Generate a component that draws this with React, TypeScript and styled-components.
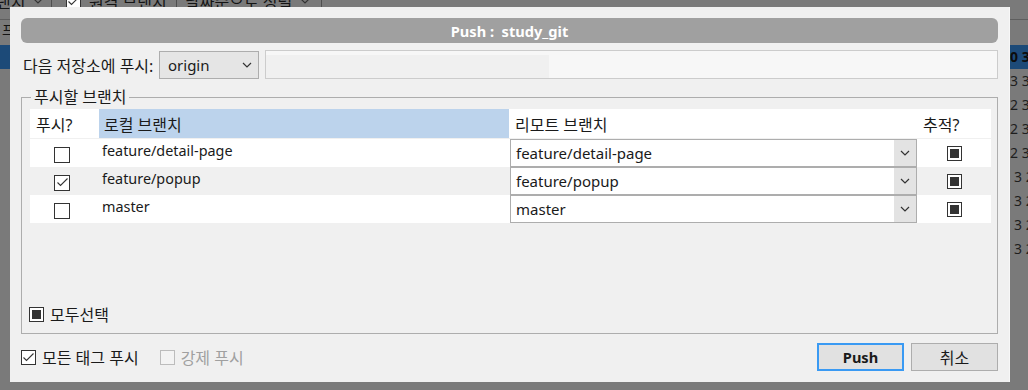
import React from "react";
import styled, { createGlobalStyle, css } from "styled-components";

const GlobalStyle = createGlobalStyle`
    html, body {
        margin: 0;
        padding: 0;
    }
    body {
        width: 1028px;
        height: 390px;
        overflow: hidden;
        background: #7a7a7a;
        font-family: "Noto Sans", "Noto Sans CJK KR", sans-serif;
        font-size: 14.4px;
        color: #1a1a1a;
    }
`;

const FONT = `"Noto Sans", "Noto Sans CJK KR", sans-serif`;
// 한글 라벨은 Latin 보다 살짝 크게 (맑은 고딕 폭 맞춤)
const KO_SIZE = "16px";

// 뒤에 깔린 메인 화면 (어둡게)
const Screen = styled.div`
    position: relative;
    width: 1028px;
    height: 390px;
    overflow: hidden;
    background: #7a7a7a;
`;

const Toolbar = styled.div`
    height: 19px;
    border-bottom: 1px solid #5e5e5e;
    display: flex;
    align-items: flex-start;
    overflow: hidden;
`;

const ToolItem = styled.div<{ w: number; pl?: number }>`
    width: ${p => p.w}px;
    margin-top: -10px;
    height: 22px;
    display: flex;
    align-items: center;
    gap: 8px;
    padding-left: ${p => p.pl || 8}px;
    box-sizing: border-box;
    border-right: 1px solid #4e4e4e;
    color: #141414;
    font-size: ${KO_SIZE};
    white-space: nowrap;
    &:first-child {
        margin-left: -12px;
    }
`;

const Behind = styled.div`
    display: flex;
    justify-content: space-between;
`;

const BehindCol = styled.div<{ w: number }>`
    width: ${p => p.w}px;
    overflow: hidden;
    display: flex;
    flex-direction: column;
`;

const BehindHead = styled.div`
    height: 25px;
    color: #141414;
    font-size: 14px;
    line-height: 20px;
    padding-left: 2px;
    white-space: nowrap;
`;

const BehindRow = styled.div<{ selected?: boolean; indent?: number }>`
    height: 24px;
    line-height: 24px;
    font-size: 14px;
    white-space: nowrap;
    padding-left: ${p => p.indent || 1}px;
    color: #1e1e1e;
    ${p =>
        p.selected &&
        css`
            background: #1c4a78;
            color: #0c0c0c;
            font-weight: 700;
        `}
`;

// 다이얼로그
const Dialog = styled.div`
    position: absolute;
    left: 10px;
    top: 7px;
    width: 1000px;
    height: 375px;
    box-sizing: border-box;
    padding: 11px;
    background: #f0f0f0;
    border-right: 1px solid #f7f7f7;
    display: flex;
    flex-direction: column;
`;

const TitleBar = styled.div`
    height: 25px;
    border-radius: 6px;
    background: #a0a0a0;
    color: #ffffff;
    font-weight: 700;
    font-size: 14.6px;
    display: flex;
    align-items: center;
    justify-content: center;
    white-space: pre;
`;

const RepoRow = styled.div`
    margin-top: 7px;
    height: 29px;
    display: flex;
    align-items: center;
`;

const Label = styled.span<{ disabled?: boolean }>`
    color: ${p => (p.disabled ? "#a0a0a0" : "#1a1a1a")};
    font-size: ${KO_SIZE};
    white-space: nowrap;
`;

const RepoLabel = styled(Label)`
    width: 138px;
    padding-left: 2px;
    box-sizing: border-box;
`;

const Combo = styled.div<{ w?: number; bg?: string }>`
    ${p => (p.w ? `width: ${p.w}px;` : "flex: 1;")}
    height: 28px;
    box-sizing: border-box;
    border: 1px solid #adadad;
    background: ${p => p.bg || "#ffffff"};
    display: flex;
    align-items: center;
    justify-content: space-between;
`;

const ComboText = styled.span<{ pl?: number }>`
    padding-left: ${p => p.pl || 5}px;
    font-size: 15px;
    white-space: nowrap;
    color: #1a1a1a;
`;

const ComboButton = styled.div<{ filled?: boolean }>`
    width: 22px;
    align-self: stretch;
    display: flex;
    align-items: center;
    justify-content: center;
    background: ${p => (p.filled ? "#e3e3e3" : "transparent")};
`;

const UrlBox = styled.div`
    flex: 1;
    margin-left: 6px;
    height: 29px;
    box-sizing: border-box;
    border: 1px solid #cccccc;
    background: #f7f7f7;
    display: flex;
    align-items: flex-end;
`;

const UrlInner = styled.div`
    width: 283px;
    height: 23px;
    background: #f0f0f0;
`;

const Group = styled.div`
    position: relative;
    margin-top: 18px;
    height: 237px;
    box-sizing: border-box;
    border: 1px solid #adadad;
    padding: 11px 6px 0 8px;
    display: flex;
    flex-direction: column;
`;

const Legend = styled.span`
    position: absolute;
    left: 9px;
    top: -12px;
    padding: 0 3px;
    background: #f0f0f0;
    line-height: 22px;
    font-size: ${KO_SIZE};
    color: #1a1a1a;
`;

const Table = styled.div`
    display: grid;
    grid-template-columns: 69px 410px 408px 74px;
    grid-template-rows: 30px 28px 28px 28px;
    flex: 1;
    align-content: start;
`;

const HeadCell = styled.div<{ active?: boolean }>`
    background: ${p => (p.active ? "#bcd3ec" : "#ffffff")};
    border-bottom: 1px solid #f0f0f0;
    display: flex;
    align-items: center;
    padding-left: ${p => (p.active ? 5 : 6)}px;
    color: #1a1a1a;
    font-size: ${KO_SIZE};
    white-space: nowrap;
`;

const Cell = styled.div<{ alt?: boolean; center?: boolean }>`
    background: ${p => (p.alt ? "#f0f0f0" : "#ffffff")};
    display: flex;
    align-items: ${p => (p.center ? "center" : "flex-start")};
    justify-content: ${p => (p.center ? "center" : "flex-start")};
    padding-left: ${p => (p.center ? 0 : 3)}px;
    line-height: 23px;
    white-space: nowrap;
    color: #1a1a1a;
`;

const RemoteCell = styled(Cell)`
    padding-left: 1px;
    align-items: stretch;
`;

const SelectAll = styled.div`
    display: flex;
    align-items: center;
    gap: 6px;
    margin-left: -1px;
    margin-bottom: 7px;
`;

const BottomRow = styled.div`
    margin-top: 9px;
    height: 28px;
    display: flex;
    align-items: center;
`;

const CheckLine = styled.label<{ ml?: number }>`
    display: flex;
    align-items: center;
    gap: 6px;
    margin-left: ${p => p.ml || 0}px;
`;

const Buttons = styled.div`
    margin-left: auto;
    display: flex;
    gap: 7px;
`;

const Button = styled.button<{ primary?: boolean }>`
    width: 87px;
    height: 28px;
    box-sizing: border-box;
    background: #e1e1e1;
    border: ${p => (p.primary ? "2px solid #3a9af3" : "1px solid #adadad")};
    font-family: ${FONT};
    font-size: ${p => (p.primary ? "14.6px" : KO_SIZE)};
    font-weight: ${p => (p.primary ? 700 : 400)};
    color: #1a1a1a;
    padding: 0;
`;

const Box = styled.span<{ disabled?: boolean; size: number }>`
    width: ${p => p.size}px;
    height: ${p => p.size}px;
    box-sizing: border-box;
    border: 1px solid ${p => (p.disabled ? "#bcbcbc" : "#333333")};
    background: ${p => (p.disabled ? "#f3f3f3" : "#ffffff")};
    display: flex;
    align-items: center;
    justify-content: center;
    flex: none;
`;

const Fill = styled.span`
    width: 9px;
    height: 9px;
    background: #333333;
`;

type CheckState = "off" | "on" | "mixed";

const Check: React.FC<{ state: CheckState; disabled?: boolean; size?: number; mt?: number; ml?: number }> = ({
    state,
    disabled,
    size = 15,
    mt,
    ml
}) => (
    <Box disabled={disabled} size={size} style={mt || ml ? { marginTop: mt, marginLeft: ml } : undefined}>
        {state === "on" && (
            <svg width="13" height="13" viewBox="0 0 13 13">
                <polyline points="1.5,6.5 4.5,9.5 11.5,2.5" fill="none" stroke="#333" strokeWidth="1.1" />
            </svg>
        )}
        {state === "mixed" && <Fill />}
    </Box>
);

const Chevron = () => (
    <svg width="10" height="6" viewBox="0 0 10 6">
        <polyline points="1,1 5,5 9,1" fill="none" stroke="#333" strokeWidth="1.2" />
    </svg>
);

const branches = [
    { local: "feature/detail-page", remote: "feature/detail-page", push: false },
    { local: "feature/popup", remote: "feature/popup", push: true },
    { local: "master", remote: "master", push: false }
];

const rightNums = [
    { t: "0 3", sel: true, i: 1 },
    { t: "3 3", i: 1 },
    { t: "2 3", i: 1 },
    { t: "2 3", i: 1 },
    { t: "2 3", i: 1 },
    { t: "3 2", i: 5 },
    { t: "3 2", i: 5 },
    { t: "3 2", i: 5 },
    { t: "3 2", i: 5 }
];

const App: React.FC = () => {
    return (
        <Screen>
            <GlobalStyle />
            <Toolbar>
                <ToolItem w={64}>
                    랜치 <Chevron />
                </ToolItem>
                <ToolItem w={125} pl={14}>
                    <Check state="on" /> 원격 브랜치
                </ToolItem>
                <ToolItem w={145}>
                    날짜순으로 정렬 <Chevron />
                </ToolItem>
            </Toolbar>
            <Behind>
                <BehindCol w={10}>
                    <BehindHead>프로</BehindHead>
                    <BehindRow selected> </BehindRow>
                </BehindCol>
                <BehindCol w={19}>
                    <BehindHead> </BehindHead>
                    {rightNums.map((n, i) => (
                        <BehindRow key={i} selected={n.sel} indent={n.i}>
                            {n.t}
                        </BehindRow>
                    ))}
                </BehindCol>
            </Behind>

            <Dialog>
                <TitleBar>{"Push :  study_git"}</TitleBar>

                <RepoRow>
                    <RepoLabel>다음 저장소에 푸시:</RepoLabel>
                    <Combo w={100} bg="#e5e5e5">
                        <ComboText pl={8}>origin</ComboText>
                        <ComboButton>
                            <Chevron />
                        </ComboButton>
                    </Combo>
                    <UrlBox>
                        <UrlInner />
                    </UrlBox>
                </RepoRow>

                <Group>
                    <Legend>푸시할 브랜치</Legend>
                    <Table>
                        <HeadCell>푸시?</HeadCell>
                        <HeadCell active>로컬 브랜치</HeadCell>
                        <HeadCell>리모트 브랜치</HeadCell>
                        <HeadCell>추적?</HeadCell>
                        {branches.map((b, i) => (
                            <React.Fragment key={b.local}>
                                <Cell alt={i === 1} center>
                                    <Check state={b.push ? "on" : "off"} size={16} mt={3} ml={-5} />
                                </Cell>
                                <Cell alt={i === 1}>{b.local}</Cell>
                                <RemoteCell alt={i === 1}>
                                    <Combo>
                                        <ComboText>{b.remote}</ComboText>
                                        <ComboButton filled>
                                            <Chevron />
                                        </ComboButton>
                                    </Combo>
                                </RemoteCell>
                                <Cell alt={i === 1} center>
                                    <Check state="mixed" />
                                </Cell>
                            </React.Fragment>
                        ))}
                    </Table>
                    <SelectAll>
                        <Check state="mixed" />
                        <Label>모두선택</Label>
                    </SelectAll>
                </Group>

                <BottomRow>
                    <CheckLine>
                        <Check state="on" />
                        <Label>모든 태그 푸시</Label>
                    </CheckLine>
                    <CheckLine ml={21}>
                        <Check state="off" disabled />
                        <Label disabled>강제 푸시</Label>
                    </CheckLine>
                    <Buttons>
                        <Button primary>Push</Button>
                        <Button>취소</Button>
                    </Buttons>
                </BottomRow>
            </Dialog>
        </Screen>
    );
};

export default App;
